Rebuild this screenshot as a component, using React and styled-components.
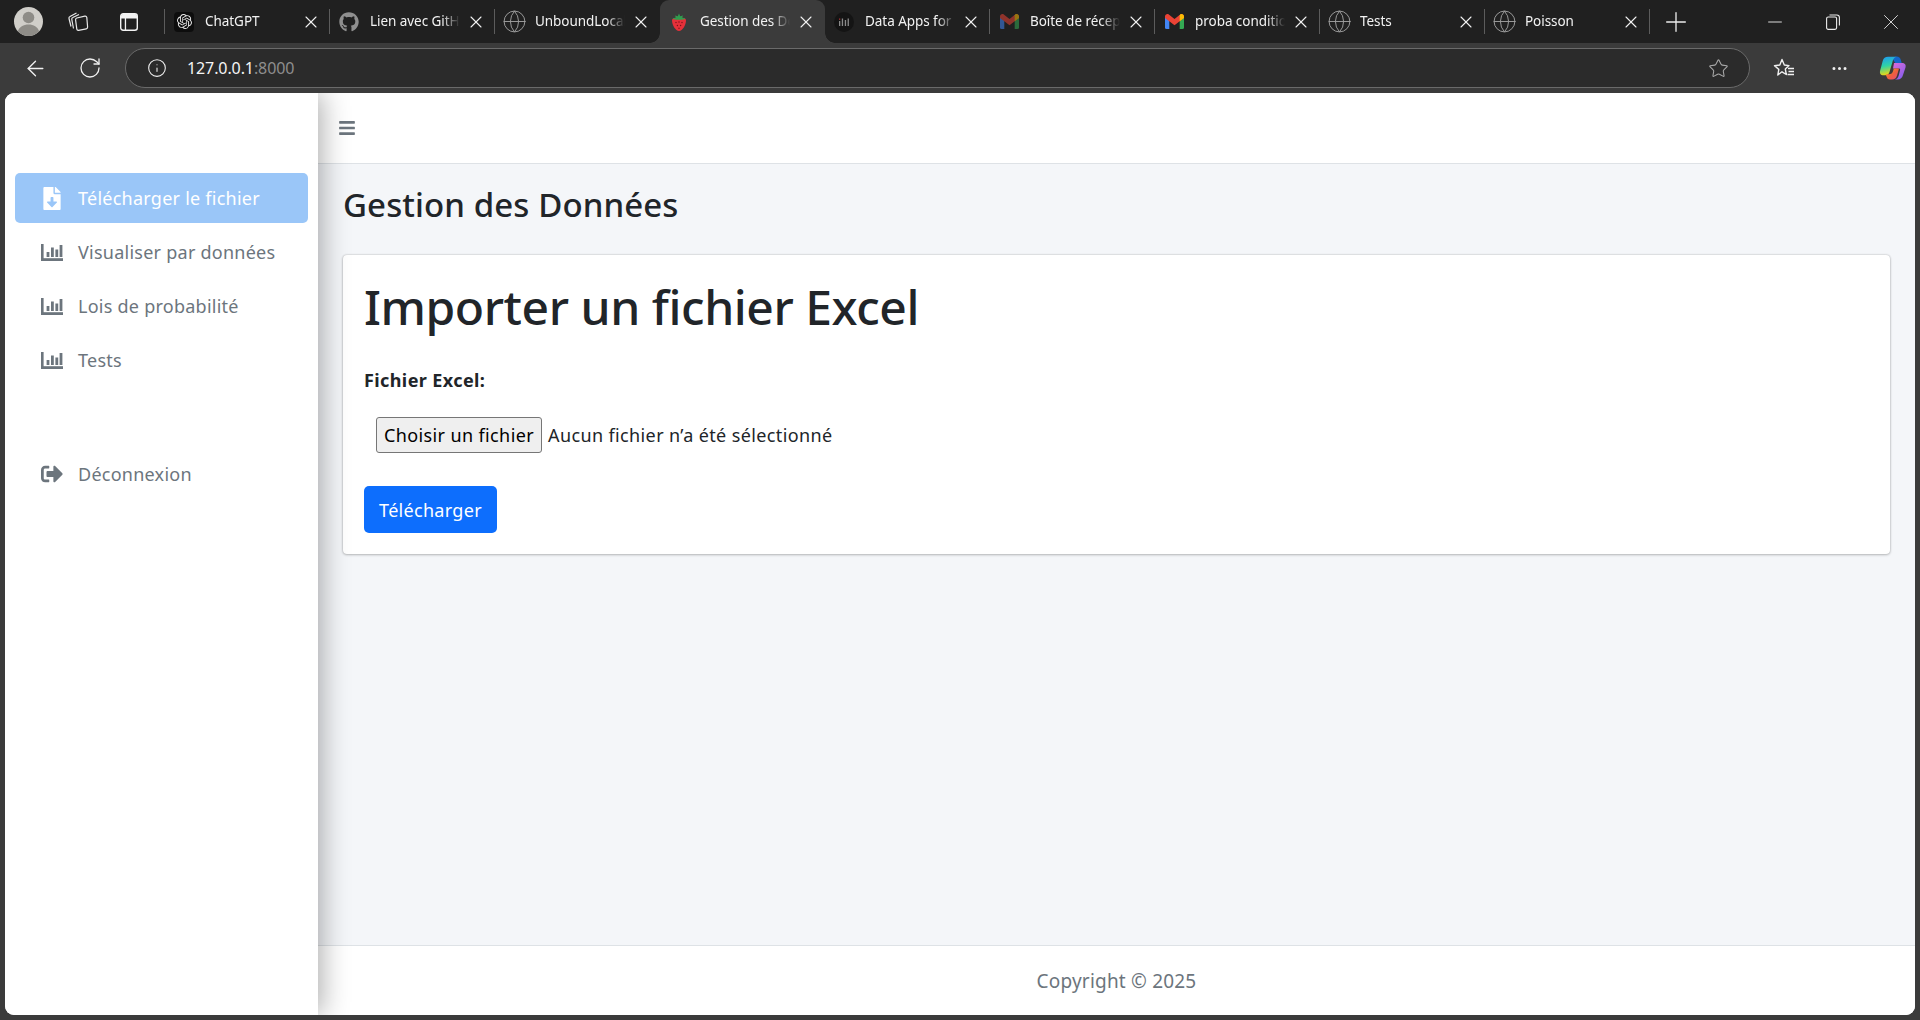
import React from 'react';
import styled, { createGlobalStyle } from 'styled-components';
import { FaBars, FaFileDownload, FaSignOutAlt, FaGithub } from 'react-icons/fa';
import { SiOpenai } from 'react-icons/si';
import { X, Plus, Globe, Minus, ArrowLeft, RotateCw, Info, Star, MoreHorizontal } from 'lucide-react';

const GlobalStyle = createGlobalStyle`
  * { box-sizing: border-box; }
  html, body { margin: 0; height: 100%; }
  body {
    background: #3b3b3b;
    font-family: "Noto Sans", "Open Sans", sans-serif;
    color: #212529;
    overflow: hidden;
  }
`;

const Bars = () => (
  <svg width="22" height="17" viewBox="0 0 22 17" fill="currentColor">
    <rect x="0" y="0" width="2.6" height="17" />
    <rect x="0" y="14.2" width="22" height="2.8" />
    <rect x="5.6" y="8" width="2.8" height="5" />
    <rect x="10" y="3.5" width="2.8" height="9.5" />
    <rect x="14.4" y="5.5" width="2.8" height="7.5" />
    <rect x="18.6" y="1" width="2.8" height="12" />
  </svg>
);

const Avatar = () => (
  <svg width="29" height="29" viewBox="0 0 29 29">
    <circle cx="14.5" cy="14.5" r="14.5" fill="#d0cec9" />
    <circle cx="14.5" cy="10.5" r="5.8" fill="#8e8c87" />
    <path d="M3.8 24.2c1.6-4.6 5.6-6.8 10.7-6.8s9.1 2.2 10.7 6.8a14.5 14.5 0 0 1-21.4 0z" fill="#8e8c87" />
  </svg>
);

const Workspaces = () => (
  <svg width="22" height="21" viewBox="0 0 22 21" fill="none" stroke="#e8e8e8" strokeWidth="1.2" strokeLinejoin="round">
    <path d="M4 15.5 2 7.5q-.3-1.5 1-2L9.5 2" />
    <path d="M6.5 17.5 4.8 8.5q-.3-1.5 1-2L12 3.5" />
    <path d="M8.6 9q-.3-1.600 1.200-2l8-1.800q1.600-.3 2 1.200l.8 9.600q.1 1.500-1.300 1.800l-7.800 1.500q-1.400.2-1.700-1.200z" />
  </svg>
);

const TabsIcon = () => (
  <svg width="18" height="18" viewBox="0 0 18 18">
    <rect x="0.7" y="0.7" width="16.6" height="16.6" rx="2.500" fill="none" stroke="#f2f2f2" strokeWidth="1.400" />
    <path d="M1 3a2 2 0 0 1 2-2h12a2 2 0 0 1 2 2v2.500H1z" fill="#f2f2f2" />
    <rect x="4.800" y="5" width="1.300" height="12" fill="#f2f2f2" />
  </svg>
);

const Strawberry = () => (
  <svg width="16" height="20" viewBox="0 0 16 20">
    <path d="M1 8.500C1 6.500 3 5.500 8 5.500s7 1 7 3c0 4.500-3.500 10.500-7 10.500S1 13 1 8.500z" fill="#e5303a" />
    <path d="M1.500 6.500 5 5.500 3.800 3.500l3 .8L8 1.500l1.200 2.800 3-.8L11 5.500l3.500 1C12 8 10 7.800 8 7.800S4 8 1.500 6.500z" fill="#2f9d4e" />
    <g fill="#7a1218">
      <circle cx="5" cy="10.500" r=".7" /><circle cx="8" cy="10" r=".7" /><circle cx="11" cy="10.500" r=".7" />
      <circle cx="6.400" cy="13.500" r=".7" /><circle cx="9.600" cy="13.500" r=".7" /><circle cx="8" cy="16.300" r=".7" />
    </g>
  </svg>
);

const DataApps = () => (
  <svg width="20" height="20" viewBox="0 0 20 20">
    <circle cx="10" cy="10" r="10" fill="#141414" />
    <g fill="#8a8a8a">
      <rect x="5" y="9" width="1.300" height="5" />
      <rect x="7.800" y="6.500" width="1.300" height="7.500" />
      <rect x="10.800" y="8" width="1.300" height="6" />
      <rect x="13.600" y="6.500" width="1.300" height="7.500" />
    </g>
    <rect x="5" y="6.500" width="1.300" height="1.300" fill="#a33" />
  </svg>
);

const Gmail = ({ dim }) => (
  <svg width="19" height="15" viewBox="0 0 19 15" style={{ opacity: dim ? 0.55 : 1 }}>
    <path d="M0 3v10.500A1.500 1.500 0 0 0 1.500 15H4.300V6.500z" fill="#4285f4" />
    <path d="M19 3v10.500a1.500 1.500 0 0 1-1.500 1.500h-2.800V6.500z" fill="#34a853" />
    <path d="M0 2.500C0 .4 2.300-.7 3.800.5L9.500 5l5.700-4.500C16.700-.7 19 .4 19 2.500V4l-4.300 3.200-5.200 4-5.200-4L0 4z" fill="#ea4335" />
    <path d="M14.700 1.200 15.200.5C16.700-.7 19 .4 19 2.500V4l-4.300 3.200z" fill="#fbbc04" />
  </svg>
);

const Copilot = () => (
  <svg width="28" height="28" viewBox="0 0 28 28">
    <defs>
      <linearGradient id="cpA" x1="0.2" y1="0" x2="0.4" y2="1">
        <stop offset="0" stopColor="#1f9cf0" />
        <stop offset="0.5" stopColor="#2fd3a5" />
        <stop offset="1" stopColor="#f5d90a" />
      </linearGradient>
      <linearGradient id="cpB" x1="0.2" y1="0" x2="0.9" y2="1">
        <stop offset="0" stopColor="#d46ad8" />
        <stop offset="1" stopColor="#7d5cf0" />
      </linearGradient>
      <linearGradient id="cpC" x1="0" y1="0" x2="1" y2="1">
        <stop offset="0" stopColor="#f7b23a" />
        <stop offset="0.5" stopColor="#f0613a" />
        <stop offset="1" stopColor="#e8467c" />
      </linearGradient>
    </defs>
    <path d="M17.500 2.500c2.600 0 3.700 1.400 4.300 3.400l1.300 4.400H17L13.500 4.600C14.300 3.200 15.700 2.500 17.500 2.500z" fill="#1566c9" />
    <path d="M9 2.800h8.600c-2 .3-3.100 1.700-3.800 4L10.500 18c-.7 2.300-2.200 3.300-4.300 3.300H4.500C1.800 21.300.4 19.500 1.100 16.700L3.700 7C4.500 4.200 6.300 2.800 9 2.800z" fill="url(#cpA)" />
    <path d="M15 9h8c2.800 0 4.200 1.700 3.500 4.500L24 21c-.8 2.800-2.600 4.500-5.300 4.500H16c2-.3 3-1.700 3.700-4L21 16.500c.4-1.500-.1-2-1.200-2H14z" fill="url(#cpB)" />
    <path d="M20 14.500 18 21.500c-.7 2.600-2.300 4-5 4h-2c-2 0-3-1.300-3.600-3.300l-.7-2h3.500c2 0 3.200-1 3.800-3l.8-2.700z" fill="url(#cpC)" />
  </svg>
);

const Browser = styled.div`
  display: flex;
  flex-direction: column;
  height: 100vh;
`;

const TabStrip = styled.div`
  display: flex;
  align-items: stretch;
  height: 43px;
  background: #202020;
  flex: none;
`;

const StripLeft = styled.div`
  display: flex;
  align-items: center;
  width: 165px;
  position: relative;
`;

const IconSlot = styled.span`
  display: flex;
  align-items: center;
  justify-content: center;
  width: ${(p) => p.$w}px;
  margin-left: ${(p) => p.$ml || 0}px;
  color: ${(p) => p.$color || '#f0f0f0'};
  flex: none;
`;

const Tab = styled.div`
  position: relative;
  display: flex;
  align-items: center;
  width: 165px;
  height: 43px;
  padding-left: 9px;
  color: #f2f2f2;
  background: ${(p) => (p.$active ? '#3b3b3b' : 'transparent')};
  border-radius: ${(p) => (p.$active ? '9px 9px 0 0' : '0')};
  flex: none;
`;

const Separator = styled.span`
  position: absolute;
  right: 0;
  top: 9px;
  bottom: 9px;
  width: 1px;
  background: #5c5c5c;
`;

const TabCorner = styled.span`
  position: absolute;
  bottom: 0;
  width: 10px;
  height: 10px;
  ${(p) => (p.$side === 'left'
    ? 'left: -10px; background: radial-gradient(circle at 0 0, #202020 9.5px, #3b3b3b 10px);'
    : 'right: -10px; background: radial-gradient(circle at 100% 0, #202020 9.5px, #3b3b3b 10px);')}
`;

const Favicon = styled.span`
  display: flex;
  align-items: center;
  justify-content: center;
  width: 20px;
  height: 20px;
  flex: none;

  svg {
    flex: none;
  }
`;

const GptBadge = styled.span`
  display: flex;
  align-items: center;
  justify-content: center;
  width: 20px;
  height: 20px;
  border-radius: 4px;
  background: #0d0d0d;
  color: #e8e8e8;
`;

const TabTitle = styled.span`
  margin-left: 11px;
  margin-bottom: 1px;
  width: 90px;
  font-size: 13.5px;
  line-height: 20px;
  letter-spacing: -0.05px;
  white-space: nowrap;
  overflow: hidden;
  -webkit-mask-image: linear-gradient(to right, #000 80%, transparent 100%);
  mask-image: linear-gradient(to right, #000 80%, transparent 100%);
  flex: none;
`;

const TabClose = styled.span`
  display: flex;
  margin-left: 6px;
  color: #f2f2f2;
`;

const NewTab = styled.span`
  display: flex;
  align-items: center;
  justify-content: center;
  width: 52px;
  color: #ececec;
`;

const WindowControls = styled.div`
  display: flex;
  align-items: center;
  margin-left: auto;
  color: #ececec;
`;

const WindowButton = styled.span`
  display: flex;
  align-items: center;
  justify-content: center;
  width: 58px;
`;

const Toolbar = styled.div`
  display: flex;
  align-items: center;
  height: 50px;
  background: #3b3b3b;
  color: #f0f0f0;
  flex: none;
`;

const ToolButton = styled.span`
  display: flex;
  align-items: center;
  justify-content: center;
  width: ${(p) => p.$w || 55}px;
  flex: none;
`;

const AddressBar = styled.div`
  display: flex;
  align-items: center;
  width: 1625px;
  height: 40px;
  margin-left: 15px;
  border: 1px solid #6a6a6a;
  border-radius: 20px;
  background: #2b2b2b;
  padding: 0 20px 0 21px;
  flex: none;
`;

const Url = styled.span`
  margin-left: 20px;
  font-size: 16px;
  letter-spacing: -0.1px;
  color: #f5f5f5;
`;

const UrlPort = styled.span`
  color: #8e8e8e;
`;

const FavStar = styled.span`
  display: flex;
  margin-left: auto;
  color: #a8a8a8;
`;

const Viewport = styled.div`
  display: flex;
  flex: 1;
  min-height: 0;
  margin: 0 5px 5px;
  border-radius: 9px;
  overflow: hidden;
  background: #fff;
`;

const Sidebar = styled.aside`
  position: relative;
  z-index: 2;
  width: 313px;
  padding-top: 80px;
  background: #fff;
  box-shadow: 4px 0 26px rgba(0, 0, 0, 0.32);
  flex: none;
`;

const NavItem = styled.a`
  display: flex;
  align-items: center;
  height: 50px;
  margin: 0 10px 4px;
  padding-left: 26px;
  border-radius: 5px;
  font-size: 18px;
  letter-spacing: 0.25px;
  color: ${(p) => (p.$active ? '#fff' : '#6c757d')};
  background: ${(p) => (p.$active ? '#9ac6f8' : 'transparent')};
  margin-top: ${(p) => p.$gap || 0}px;
`;

const NavIcon = styled.span`
  display: flex;
  align-items: center;
  justify-content: center;
  width: 22px;
  margin-right: 15px;
  flex: none;
`;

const Main = styled.div`
  display: flex;
  flex-direction: column;
  flex: 1;
  min-width: 0;
`;

const TopBar = styled.header`
  display: flex;
  align-items: center;
  height: 71px;
  padding-left: 20px;
  background: #fff;
  border-bottom: 1px solid #dee2e6;
  color: #6c757d;
  flex: none;
`;

const Content = styled.main`
  flex: 1;
  padding: 0 25px 0 25px;
  background: #f4f6f9;
`;

const PageTitle = styled.h2`
  margin: 22px 0 31px;
  font-size: 33px;
  line-height: 38px;
  font-weight: 500;
  letter-spacing: 0.1px;
`;

const Card = styled.section`
  height: 299px;
  padding: 23px 21px 0;
  background: #fff;
  border-radius: 4px;
  box-shadow: 0 0 2px rgba(0, 0, 0, 0.25), 0 1px 3px rgba(0, 0, 0, 0.2);
`;

const CardTitle = styled.h1`
  margin: 0 0 31px;
  font-size: 48px;
  line-height: 58px;
  font-weight: 500;
  letter-spacing: -0.45px;
`;

const FieldLabel = styled.label`
  display: block;
  font-size: 18px;
  line-height: 27px;
  font-weight: 700;
  letter-spacing: 0.4px;
`;

const FileRow = styled.div`
  display: flex;
  align-items: center;
  margin: 23px 0 33px;
  padding-left: 12px;
  font-size: 18px;
  letter-spacing: 0.38px;
`;

const FileButton = styled.button`
  height: 36px;
  width: 166px;
  margin-right: 6px;
  padding: 0;
  border: 1px solid #767676;
  border-radius: 3px;
  background: #efefef;
  color: #000;
  font: inherit;
  letter-spacing: inherit;
`;

const SubmitButton = styled.button`
  display: block;
  width: 133px;
  height: 47px;
  padding: 0;
  border: 0;
  border-radius: 5px;
  background: #0d6efd;
  color: #fff;
  font: inherit;
  font-size: 18px;
  letter-spacing: 0.3px;
`;

const Footer = styled.footer`
  display: flex;
  align-items: center;
  justify-content: center;
  height: 70px;
  padding-top: 1px;
  background: #fff;
  border-top: 1px solid #dee2e6;
  color: #6c757d;
  font-size: 19px;
  letter-spacing: 0.2px;
  flex: none;
`;

const tabs = [
  { title: 'ChatGPT', icon: <GptBadge><SiOpenai size={15} /></GptBadge>, sep: true },
  { title: 'Lien avec GitHub', icon: <FaGithub size={20} color="#8f8f8f" />, sep: true },
  { title: 'UnboundLocalError', icon: <Globe size={25} strokeWidth={0.9} color="#a0a0a0" /> },
  { title: 'Gestion des Données', icon: <Strawberry />, active: true },
  { title: 'Data Apps for', icon: <DataApps />, sep: true },
  { title: 'Boîte de réception', icon: <Gmail dim />, sep: true },
  { title: 'proba conditionnelle', icon: <Gmail />, sep: true },
  { title: 'Tests', icon: <Globe size={25} strokeWidth={0.9} color="#a0a0a0" />, sep: true },
  { title: 'Poisson', icon: <Globe size={25} strokeWidth={0.9} color="#a0a0a0" />, sep: true },
];

const navItems = [
  { label: 'Visualiser par données' },
  { label: 'Lois de probabilité' },
  { label: 'Tests' },
];

export default function App() {
  return (
    <Browser>
      <GlobalStyle />
      <TabStrip>
        <StripLeft>
          <IconSlot $w={29} $ml={14}><Avatar /></IconSlot>
          <IconSlot $w={22} $ml={24}><Workspaces /></IconSlot>
          <IconSlot $w={18} $ml={31}><TabsIcon /></IconSlot>
          <Separator />
        </StripLeft>
        {tabs.map((tab) => (
          <Tab key={tab.title} $active={tab.active}>
            {tab.active && <TabCorner $side="left" />}
            {tab.active && <TabCorner $side="right" />}
            <Favicon>{tab.icon}</Favicon>
            <TabTitle>{tab.title}</TabTitle>
            <TabClose><X size={20} strokeWidth={1.3} /></TabClose>
            {tab.sep && <Separator />}
          </Tab>
        ))}
        <NewTab><Plus size={32} strokeWidth={1} /></NewTab>
        <WindowControls>
          <WindowButton><Minus size={22} strokeWidth={1} /></WindowButton>
          <WindowButton>
            <svg width="14" height="16" viewBox="0 0 14 16" fill="none" stroke="#ececec" strokeWidth="1.1">
              <rect x="0.6" y="3" width="10" height="12.400" rx="1.600" />
              <path d="M3.500 1h7.300q2.600 0 2.600 2.600v8" />
            </svg>
          </WindowButton>
          <WindowButton><X size={26} strokeWidth={0.8} /></WindowButton>
        </WindowControls>
      </TabStrip>
      <Toolbar>
        <ToolButton $w={70}><ArrowLeft size={25} strokeWidth={1.3} /></ToolButton>
        <ToolButton $w={40}><RotateCw size={24} strokeWidth={1.3} /></ToolButton>
        <AddressBar>
          <Info size={20} strokeWidth={1.3} />
          <Url>127.0.0.1<UrlPort>:8000</UrlPort></Url>
          <FavStar><Star size={21} strokeWidth={1.2} /></FavStar>
        </AddressBar>
        <ToolButton $w={68}>
          <svg width="22" height="21" viewBox="0 0 22 21" fill="none" stroke="#f0f0f0" strokeWidth="1.400" strokeLinejoin="round">
            <path d="M9 1.500 11.300 7l4.700.6-3.700 3.400 1 5.500L9 13.800 4.800 17l1-5.600L1.500 7.800 6.800 7z" />
            <path d="M15 10.500h6M15.500 13.500h5.500M14.500 16.500h6.500" />
          </svg>
        </ToolButton>
        <ToolButton $w={42}><MoreHorizontal size={19} strokeWidth={1.8} /></ToolButton>
        <ToolButton $w={66}><Copilot /></ToolButton>
      </Toolbar>
      <Viewport>
        <Sidebar>
          <NavItem $active>
            <NavIcon><FaFileDownload size={23} /></NavIcon>
            Télécharger le fichier
          </NavItem>
          {navItems.map((item) => (
            <NavItem key={item.label}>
              <NavIcon><Bars /></NavIcon>
              {item.label}
            </NavItem>
          ))}
          <NavItem $gap={64}>
            <NavIcon><FaSignOutAlt size={22} /></NavIcon>
            Déconnexion
          </NavItem>
        </Sidebar>
        <Main>
          <TopBar><FaBars size={18} /></TopBar>
          <Content>
            <PageTitle>Gestion des Données</PageTitle>
            <Card>
              <CardTitle>Importer un fichier Excel</CardTitle>
              <FieldLabel>Fichier Excel:</FieldLabel>
              <FileRow>
                <FileButton type="button">Choisir un fichier</FileButton>
                Aucun fichier n’a été sélectionné
              </FileRow>
              <SubmitButton type="button">Télécharger</SubmitButton>
            </Card>
          </Content>
          <Footer>Copyright © 2025</Footer>
        </Main>
      </Viewport>
    </Browser>
  );
}
